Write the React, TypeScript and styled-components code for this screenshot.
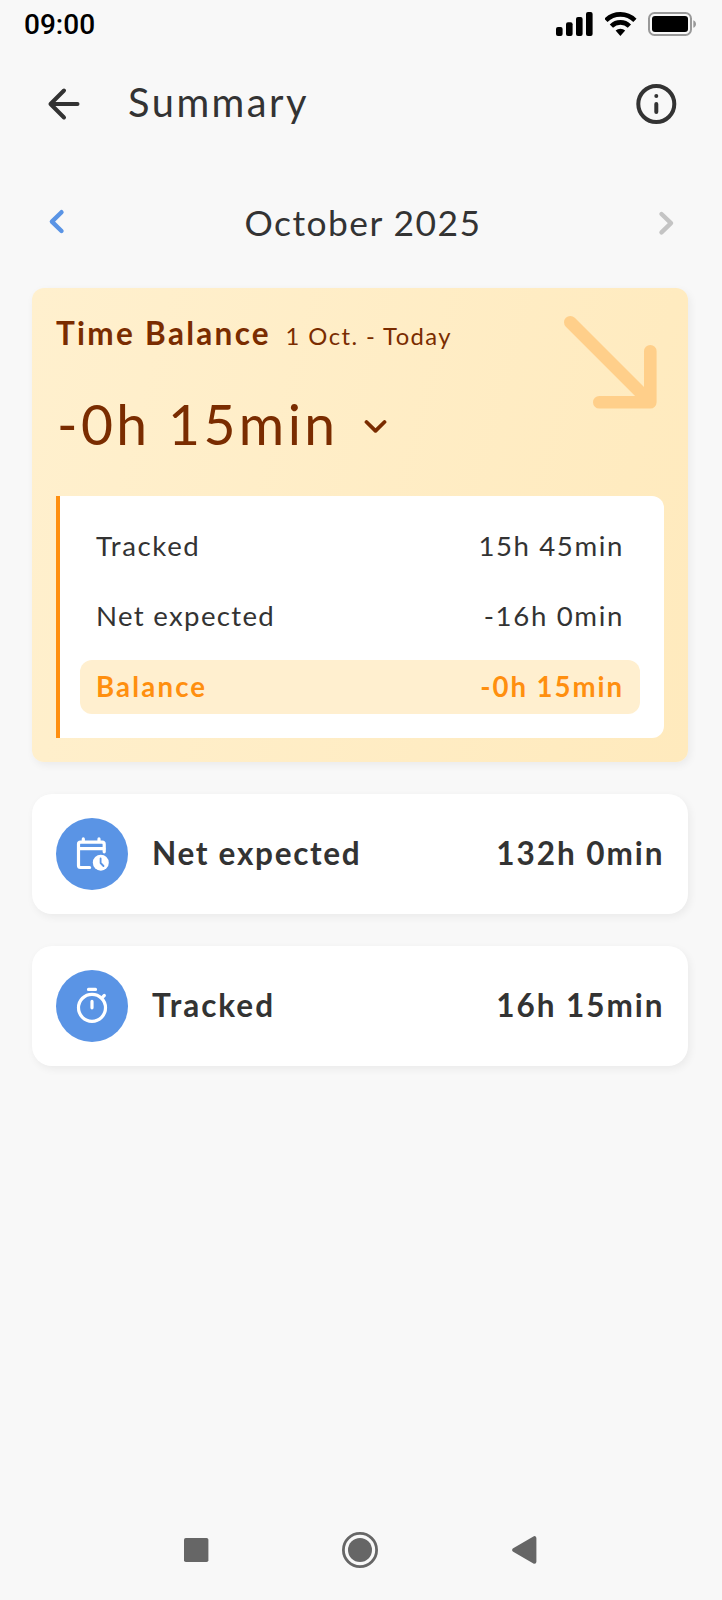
import React from 'react';
import styled, { createGlobalStyle } from 'styled-components';

const GlobalStyle = createGlobalStyle`
  * { box-sizing: border-box; }
  body { margin: 0; background: #f8f8f8; }
`;

const Screen = styled.div`
  display: flex;
  flex-direction: column;
  width: 722px;
  height: 1600px;
  background: #f8f8f8;
  color: #333;
  font-family: Lato, 'Noto Sans', sans-serif;
`;

const Text = styled.span<{ $size: number; $spacing?: number; $bold?: boolean }>`
  font-size: ${p => p.$size}px;
  font-weight: ${p => (p.$bold ? 700 : 400)};
  letter-spacing: ${p => p.$spacing ?? 0}px;
  line-height: 1.248;
  padding-bottom: 0.04em;
  white-space: nowrap;
  font-kerning: normal;
`;

const StatusBar = styled.header`
  display: flex;
  align-items: center;
  height: 48px;
  padding: 0 25px 0 24px;
`;

const Clock = styled.time`
  flex: 1;
  padding-top: 1px;
  font: 500 28px/47px Roboto, sans-serif;
  color: #000;
`;

const AppBar = styled.div`
  display: flex;
  align-items: center;
  height: 112px;
  padding: 0 42px 0 40px;
`;

const Title = styled.h1`
  display: flex;
  flex: 1;
  margin: 0 0 2px 40px;
  font-weight: 400;
`;

const MonthBar = styled.nav`
  display: flex;
  align-items: center;
  justify-content: space-between;
  height: 128px;
  padding: 0 43px 2px 45px;
`;

const MonthLabel = styled.div`
  display: flex;
  padding: 1px 0 0 2px;
`;

const Content = styled.main`
  display: flex;
  flex: 1;
  flex-direction: column;
  gap: 32px;
  padding: 0 34px 0 32px;
`;

const shadow = '2px 3px 8px rgba(0, 0, 0, 0.06)';

const BalanceCard = styled.section`
  position: relative;
  height: 474px;
  padding: 24px;
  border-radius: 12px;
  background: linear-gradient(105deg, #fff0ce, #ffeabd);
  box-shadow: ${shadow};
  color: #7a2c00;
`;

const TrendArrow = styled.svg`
  position: absolute;
  top: 28px;
  right: 31px;
`;

const BalanceHeading = styled.div`
  display: flex;
  align-items: baseline;
  gap: 14.6px;
  height: 44px;
  padding-top: 2px;
`;

const BalanceTotal = styled.div`
  display: flex;
  align-items: center;
  gap: 25px;
  height: 76px;
  margin: 32px 0 32px 1px;
`;

const Breakdown = styled.div`
  display: flex;
  flex-direction: column;
  gap: 16px;
  height: 242px;
  padding: 24px 24px 24px 20px;
  border-left: 4px solid #ff8f0f;
  border-radius: 0 12px 12px 0;
  background: #fff;
`;

const BreakdownRow = styled.div<{ $highlight?: boolean }>`
  display: flex;
  align-items: center;
  justify-content: space-between;
  height: 54px;
  padding: ${p => (p.$highlight ? '1px' : '0')} 16px 0 16px;
  border-radius: 12px;
  background: ${p => (p.$highlight ? '#ffefcf' : 'transparent')};
  color: ${p => (p.$highlight ? '#ff8f0f' : '#333')};
`;

const StatCard = styled.section`
  display: flex;
  align-items: center;
  height: 120px;
  padding: 24px 23.5px 24px 24px;
  border-radius: 20px;
  background: #fff;
  box-shadow: ${shadow};
`;

const StatIcon = styled.div`
  display: grid;
  place-items: center;
  width: 72px;
  height: 72px;
  margin-right: 24px;
  border-radius: 50%;
  background: #5a94e5;
`;

const StatLabel = styled.div`
  display: flex;
  flex: 1;
`;

const SystemNav = styled.footer`
  display: flex;
  align-items: center;
  justify-content: space-between;
  height: 100px;
  padding: 0 185px 0 184px;
`;

const StatusIcons = styled.div`
  display: flex;
  gap: 11.5px;
`;

const SignalIcon = () => (
  <svg width="37" height="24" viewBox="0 0 37 24">
    <rect x="0" y="15" width="6.6" height="9" rx="2" />
    <rect x="10" y="10.3" width="6.6" height="13.7" rx="2" />
    <rect x="20" y="5" width="6.6" height="19" rx="2" />
    <rect x="30" y="0" width="6.6" height="24" rx="2" />
  </svg>
);

const WifiIcon = () => (
  <svg width="32" height="24" viewBox="0.6 0 32 24">
    <g fill="none" stroke="#000" strokeWidth="4.6">
      <path d="M1.5 8.4a20.5 20.5 0 0 1 29 0" />
      <path d="M7 14.1a12.8 12.8 0 0 1 18 0" />
    </g>
    <path d="M11.2 18.6a7 7 0 0 1 9.6 0L16 24z" />
  </svg>
);

const BatteryIcon = () => (
  <svg width="49" height="24" viewBox="0 0 49 24">
    <rect x="1" y="1" width="42" height="22" rx="5.5" fill="none" stroke="#999" strokeWidth="2" />
    <rect x="4" y="4" width="36" height="16" rx="3" />
    <path d="M45.3 8.2c3.6 1.4 3.6 6.2 0 7.6z" fill="#999" />
  </svg>
);

const Chevron = ({ d, color }: { d: string; color: string }) => (
  <svg width="24" height="28" viewBox="0 0 24 28" fill="none" stroke={color} strokeWidth="4.4" strokeLinecap="round" strokeLinejoin="round">
    <path d={d} />
  </svg>
);

const CalendarClockIcon = () => (
  <svg width="36" height="36" viewBox="0 0 36 36" fill="none" stroke="#fff" strokeWidth="3.2" strokeLinecap="round" strokeLinejoin="round">
    <path d="M15.6 31.5H6.5a2 2 0 0 1-2-2V8.2a2 2 0 0 1 2-2h21.7a2 2 0 0 1 2 2v7.6" />
    <path d="M5 12.7h25M9.3 5V2.9M25 5V2.9" />
    <circle cx="26.8" cy="26.7" r="8" fill="#fff" stroke="none" />
    <path d="M26.6 22.4v4.6l2.9 3" stroke="#5a94e5" strokeWidth="1.8" />
  </svg>
);

const StopwatchIcon = () => (
  <svg width="36" height="40" viewBox="0 0 36 40" fill="none" stroke="#fff" strokeWidth="3.2" strokeLinecap="round">
    <circle cx="18" cy="21.8" r="13.5" />
    <path d="M14.5 3.4h7M18 15.4v6.4M28.4 11.4l1.9-1.9" />
  </svg>
);

export default function App() {
  return (
    <>
      <GlobalStyle />
      <Screen>
        <StatusBar>
          <Clock>09:00</Clock>
          <StatusIcons>
            <SignalIcon />
            <WifiIcon />
            <BatteryIcon />
          </StatusIcons>
        </StatusBar>

        <AppBar>
          <svg width="48" height="48" viewBox="0 0 48 48" fill="none" stroke="#333" strokeWidth="4" strokeLinecap="round" strokeLinejoin="round">
            <path d="M37.5 24H10.5M24 10.5 10.5 24 24 37.5" />
          </svg>
          <Title>
            <Text $size={39.8} $spacing={2.5}>Summary</Text>
          </Title>
          <svg width="48" height="48" viewBox="0 0 48 48" fill="none" stroke="#333" strokeWidth="4" strokeLinecap="round">
            <circle cx="24.3" cy="24" r="18" />
            <path d="M24.3 24v8M24.3 16v.1" />
          </svg>
        </AppBar>

        <MonthBar>
          <Chevron d="M16.5 3.2 6.9 12.6 16.5 22" color="#5a94e5" />
          <MonthLabel>
            <Text $size={35.4} $spacing={1.45}>October 2025</Text>
          </MonthLabel>
          <Chevron d="M6.5 5 16 14.2 6.5 23.4" color="#c4c4c4" />
        </MonthBar>

        <Content>
          <BalanceCard>
            <TrendArrow width="93" height="93" viewBox="0 0 93 93" fill="none" stroke="#ffcf8a" strokeWidth="12.6" strokeLinecap="round" strokeLinejoin="round">
              <path d="M6.3 6.3 86.3 86.3M86.3 35.3v51h-51" />
            </TrendArrow>
            <BalanceHeading>
              <Text $size={31.5} $spacing={2.3} $bold>Time Balance</Text>
              <Text $size={23.8} $spacing={1.43}>1 Oct. - Today</Text>
            </BalanceHeading>
            <BalanceTotal>
              <Text $size={55.2} $spacing={3.4}>-0h 15min</Text>
              <svg width="24" height="16" viewBox="0 0 24 16" fill="none" stroke="#7a2c00" strokeWidth="3.8" strokeLinecap="round" strokeLinejoin="round">
                <path d="M3.5 4 12.5 12.8 21.5 4" />
              </svg>
            </BalanceTotal>
            <Breakdown>
              <BreakdownRow>
                <Text $size={27.6} $spacing={1.6}>Tracked</Text>
                <Text $size={27.6} $spacing={1.6}>15h 45min</Text>
              </BreakdownRow>
              <BreakdownRow>
                <Text $size={27.6} $spacing={1.32}>Net expected</Text>
                <Text $size={27.6} $spacing={1.65}>-16h 0min</Text>
              </BreakdownRow>
              <BreakdownRow $highlight>
                <Text $size={27.6} $spacing={2.15} $bold>Balance</Text>
                <Text $size={27.6} $spacing={1.95} $bold>-0h 15min</Text>
              </BreakdownRow>
            </Breakdown>
          </BalanceCard>

          <StatCard>
            <StatIcon><CalendarClockIcon /></StatIcon>
            <StatLabel><Text $size={31.5} $spacing={1.7} $bold>Net expected</Text></StatLabel>
            <Text $size={31.5} $spacing={1.95} $bold>132h 0min</Text>
          </StatCard>

          <StatCard>
            <StatIcon><StopwatchIcon /></StatIcon>
            <StatLabel><Text $size={31.5} $spacing={1.98} $bold>Tracked</Text></StatLabel>
            <Text $size={31.5} $spacing={1.95} $bold>16h 15min</Text>
          </StatCard>
        </Content>

        <SystemNav>
          <svg width="25" height="24" viewBox="0 0 25 24" fill="#666">
            <rect width="24.4" height="24" rx="1.8" />
          </svg>
          <svg width="38" height="36" viewBox="0 0 38 36" fill="#666">
            <circle cx="18" cy="18" r="16.6" fill="none" stroke="#666" strokeWidth="2.8" />
            <circle cx="18" cy="18" r="12" />
          </svg>
          <svg width="25" height="28" viewBox="0 0 25 28" fill="#666" stroke="#666" strokeWidth="4" strokeLinejoin="round">
            <path d="M2.2 14 22.4 2.2v23.6z" />
          </svg>
        </SystemNav>
      </Screen>
    </>
  );
}
